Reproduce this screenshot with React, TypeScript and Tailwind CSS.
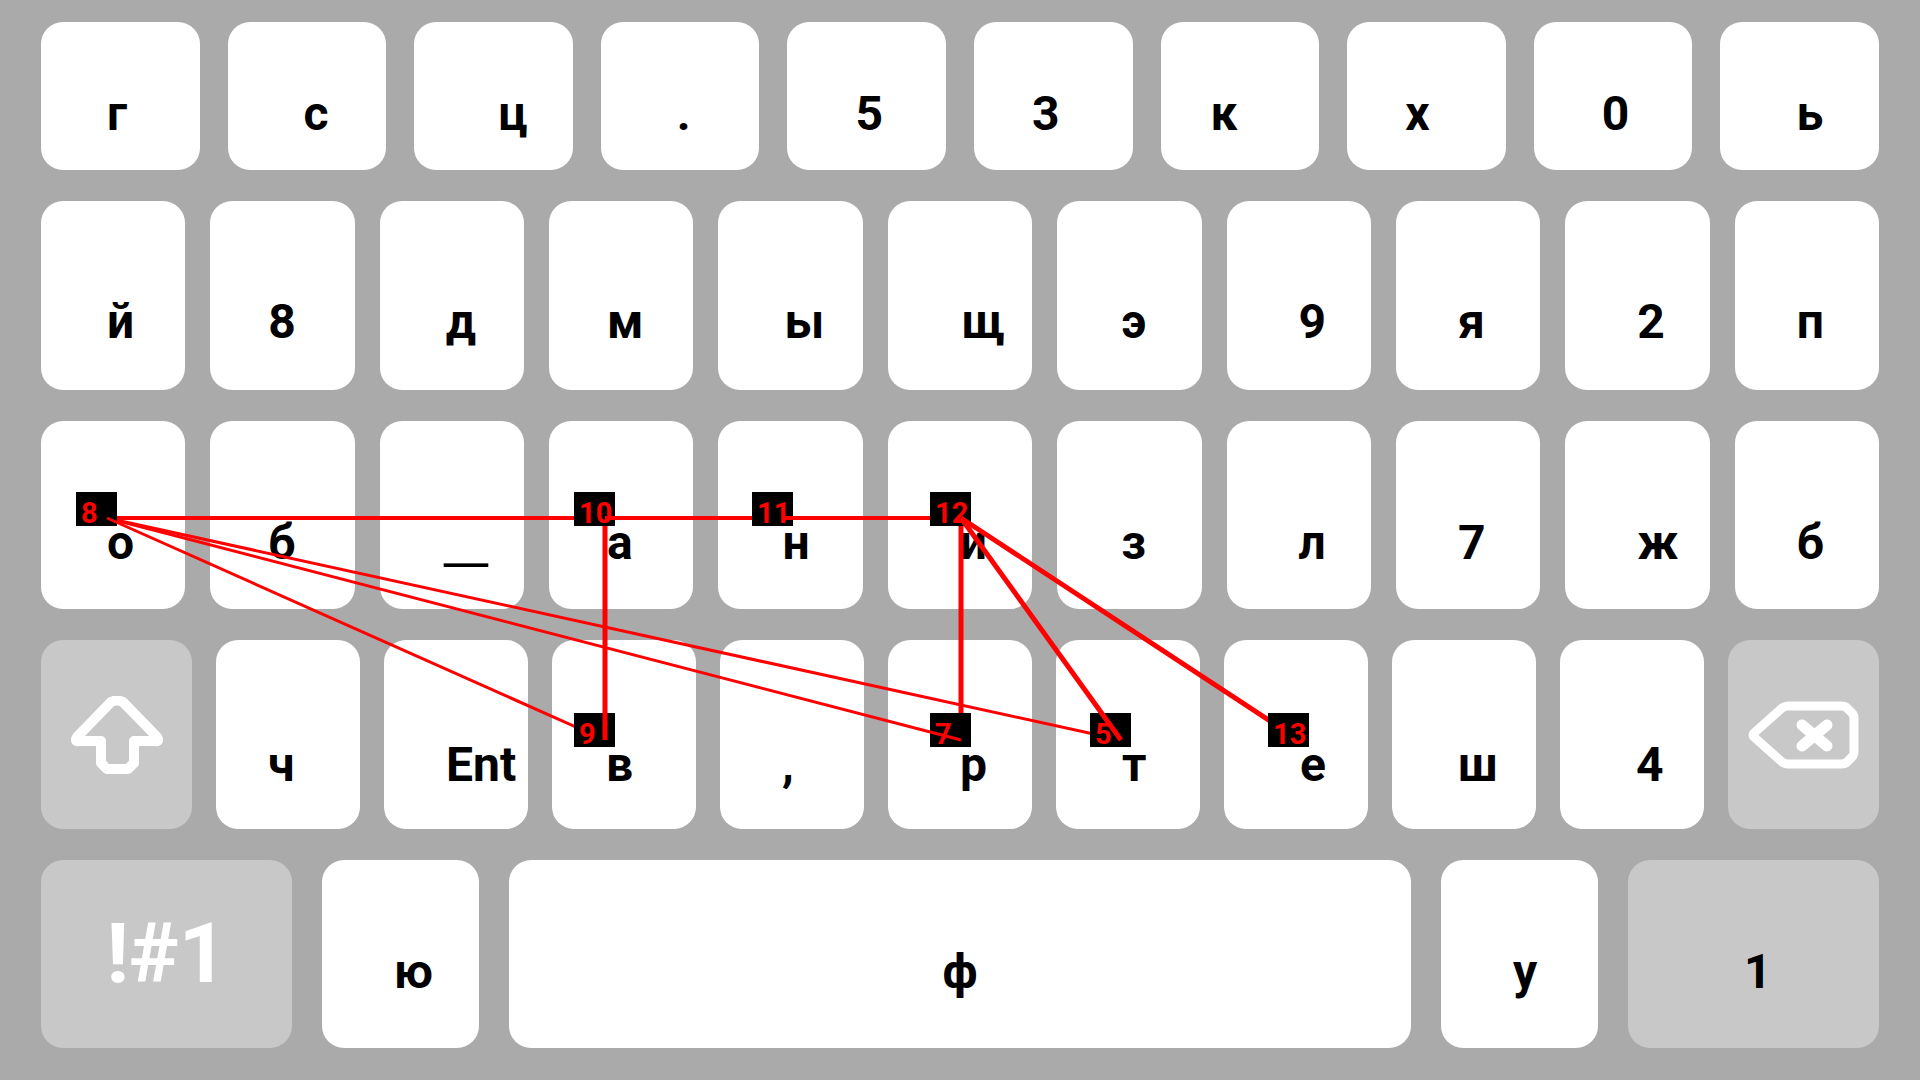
import type { ReactNode } from "react";

type KeyDef = {
  label: string;
  /** Where the label starts inside the key. */
  start: string;
};

const digitsRow: KeyDef[] = [
  { label: "г", start: "pl-[66px]" },
  { label: "с", start: "pl-[76px]" },
  { label: "ц", start: "pl-[84px]" },
  { label: ".", start: "pl-[76px]" },
  { label: "5", start: "pl-[68px]" },
  { label: "3", start: "pl-[58px]" },
  { label: "к", start: "pl-[50px]" },
  { label: "х", start: "pl-[58px]" },
  { label: "0", start: "pl-[68px]" },
  { label: "ь", start: "pl-[76px]" },
];

const upperRow: KeyDef[] = [
  { label: "й", start: "pl-[66px]" },
  { label: "8", start: "pl-[58px]" },
  { label: "д", start: "pl-[66px]" },
  { label: "м", start: "pl-[58px]" },
  { label: "ы", start: "pl-[66px]" },
  { label: "щ", start: "pl-[74px]" },
  { label: "э", start: "pl-[64px]" },
  { label: "9", start: "pl-[72px]" },
  { label: "я", start: "pl-[62px]" },
  { label: "2", start: "pl-[72px]" },
  { label: "п", start: "pl-[62px]" },
];

const homeRow: KeyDef[] = [
  { label: "о", start: "pl-[66px]" },
  { label: "б", start: "pl-[58px]" },
  { label: "__", start: "pl-[64px]" },
  { label: "а", start: "pl-[58px]" },
  { label: "н", start: "pl-[64px]" },
  { label: "и", start: "pl-[72px]" },
  { label: "з", start: "pl-[64px]" },
  { label: "л", start: "pl-[72px]" },
  { label: "7", start: "pl-[62px]" },
  { label: "ж", start: "pl-[72px]" },
  { label: "б", start: "pl-[62px]" },
];

const lowerRow: KeyDef[] = [
  { label: "ч", start: "pl-[52px]" },
  { label: "Ent", start: "pl-[62px]" },
  { label: "в", start: "pl-[54px]" },
  { label: ",", start: "pl-[62px]" },
  { label: "р", start: "pl-[72px]" },
  { label: "т", start: "pl-[66px]" },
  { label: "е", start: "pl-[76px]" },
  { label: "ш", start: "pl-[66px]" },
  { label: "4", start: "pl-[76px]" },
];

function Key({
  children,
  className,
  label,
}: {
  children: ReactNode;
  className: string;
  label?: string;
}) {
  return (
    <button
      type="button"
      aria-label={label}
      className={`flex min-w-0 rounded-[22px] font-bold text-black ${className}`}
    >
      {children}
    </button>
  );
}

function LetterKeys({ keys, bottom }: { keys: KeyDef[]; bottom: string }) {
  return (
    <>
      {keys.map((key, index) => (
        <Key
          key={index}
          className={`items-end bg-white ${
            key.label === "__"
              ? "font-['Noto_Sans',sans-serif] text-[54px] leading-[60px]"
              : "text-[48px] leading-[48px]"
          } ${bottom} ${key.start}`}
        >
          {key.label}
        </Key>
      ))}
    </>
  );
}

function ShiftIcon() {
  return (
    <svg width="92" height="78" viewBox="0 0 92 78" fill="none" stroke="#fff" strokeWidth="10" strokeLinejoin="round" aria-hidden="true">
      <path d="M40 6 Q46 3 52 6 L86 41 Q89 46 84 45 H63 V67 L57 73 H36 L30 67 V45 H8 Q3 46 6 41 Z" />
    </svg>
  );
}

function BackspaceIcon() {
  return (
    <svg width="111" height="68" viewBox="0 0 111 68" fill="none" stroke="#fff" strokeWidth="9" strokeLinejoin="round" strokeLinecap="round" aria-hidden="true">
      <path d="M6 32 L34 7 Q37 5 40 5 H93 Q97 5 99 7 L104 12 Q106 14 106 17 V51 Q106 54 104 56 L99 61 Q97 63 93 63 H40 Q37 63 34 61 L6 36 Q4 34 6 32 Z" />
      <path d="M54 24 L79 45 M79 24 L54 45" strokeWidth="11" />
    </svg>
  );
}

type Node = { x: number; y: number };

const nodes: Record<string, Node> = {
  "8": { x: 107, y: 518 },
  "10": { x: 605, y: 518 },
  "11": { x: 783, y: 518 },
  "12": { x: 961, y: 518 },
  "9": { x: 605, y: 740 },
  "7": { x: 961, y: 740 },
  "5": { x: 1121, y: 740 },
  "13": { x: 1299, y: 740 },
};

function Link({ from, to, width }: { from: string; to: string; width: number }) {
  const a = nodes[from];
  const b = nodes[to];
  return <line x1={a.x} y1={a.y} x2={b.x} y2={b.y} stroke="#ff0000" strokeWidth={width} />;
}

function Badge({ id }: { id: string }) {
  const node = nodes[id];
  const top = node.y < 600 ? 492 : 713;
  return (
    <g>
      <rect x={node.x - 31} y={top} width="41" height="34" fill="#000" />
      <text x={node.x - 26} y={top + 31} fill="#ff0000" fontSize="29" fontWeight="700">
        {id}
      </text>
    </g>
  );
}

function SwipeTrace() {
  return (
    <svg
      className="pointer-events-none absolute inset-0 h-full w-full"
      viewBox="0 0 1920 1080"
      preserveAspectRatio="none"
      role="img"
      aria-label="Swipe trace"
    >
      <Link from="12" to="7" width={5} />
      <Badge id="7" />
      <Link from="8" to="7" width={3} />
      <Link from="8" to="5" width={3} />
      <Badge id="5" />
      <Link from="8" to="10" width={4} />
      <Badge id="8" />
      <Link from="8" to="9" width={3} />
      <Badge id="9" />
      <Link from="9" to="10" width={5} />
      <Badge id="10" />
      <Link from="10" to="11" width={4} />
      <Badge id="11" />
      <Link from="11" to="12" width={4} />
      <Badge id="12" />
      <Link from="12" to="5" width={5} />
      <Link from="12" to="13" width={5} />
      <Badge id="13" />
    </svg>
  );
}

export default function App() {
  return (
    <main className="relative grid min-h-screen grid-rows-[148fr_189fr_188fr_189fr_188fr] gap-[31px] bg-[#aaaaaa] px-[41px] pt-[22px] pb-8 font-['Roboto',sans-serif]">
      <div className="grid grid-cols-10 gap-7">
        <LetterKeys keys={digitsRow} bottom="pb-8" />
      </div>
      <div className="grid grid-cols-11 gap-[25px]">
        <LetterKeys keys={upperRow} bottom="pb-11" />
      </div>
      <div className="grid grid-cols-11 gap-[25px]">
        <LetterKeys keys={homeRow} bottom="pb-[42px]" />
      </div>
      <div className="grid grid-cols-[151px_repeat(9,minmax(0,1fr))_151px] gap-6">
        <Key label="Shift" className="items-center justify-center bg-[#c8c8c8]">
          <ShiftIcon />
        </Key>
        <LetterKeys keys={lowerRow} bottom="pb-10" />
        <Key label="Backspace" className="items-center justify-center bg-[#c8c8c8]">
          <BackspaceIcon />
        </Key>
      </div>
      <div className="grid grid-cols-[251px_157px_minmax(0,1fr)_157px_251px] gap-[30px]">
        <Key className="items-center justify-center bg-[#c8c8c8]">
          <span className="text-[84px] leading-[84px] text-white">!#1</span>
        </Key>
        <Key className="items-end bg-white pb-[52px] pl-[72px] text-[48px] leading-[48px]">ю</Key>
        <Key className="items-end justify-center bg-white pb-[52px] text-[48px] leading-[48px]">ф</Key>
        <Key className="items-end bg-white pb-[52px] pl-[72px] text-[48px] leading-[48px]">у</Key>
        <Key className="items-end bg-[#c8c8c8] pb-[52px] pl-[116px] text-[48px] leading-[48px]">1</Key>
      </div>
      <SwipeTrace />
    </main>
  );
}
